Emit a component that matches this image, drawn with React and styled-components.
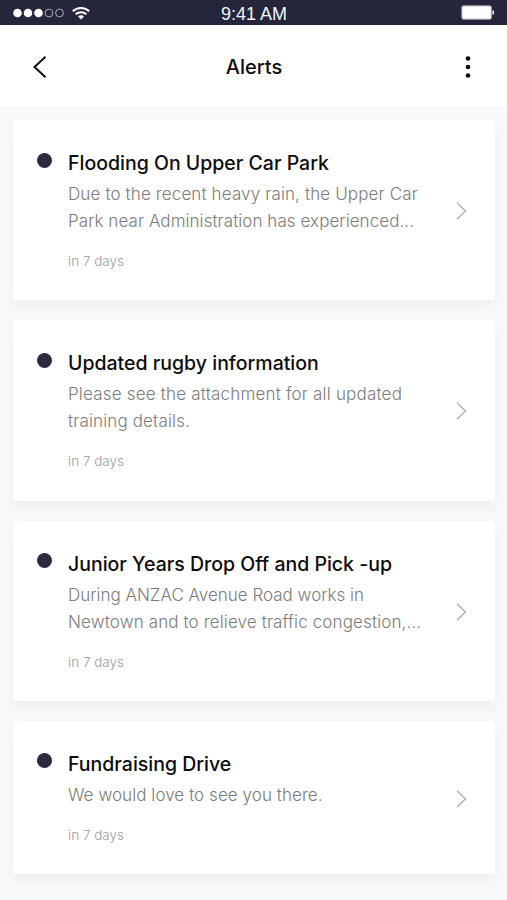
import React from 'react';
import styled, { createGlobalStyle } from 'styled-components';

const GlobalStyle = createGlobalStyle`
  * {
    box-sizing: border-box;
  }

  body {
    margin: 0;
    background: #f8f9fb;
    font-family: 'Inter', 'Liberation Sans', sans-serif;
  }
`;

const Screen = styled.div`
  height: 900px;
  overflow: hidden;
  background: #f8f9fb;
`;

const StatusBar = styled.div`
  display: grid;
  grid-template-columns: 1fr auto 1fr;
  align-items: center;
  height: 25px;
  padding: 0 12px 0 13px;
  background: #25263c;
  color: #f4f4f8;
`;

const Signal = styled.div`
  display: flex;
  align-items: center;
  gap: 7.5px;
`;

const Time = styled.div`
  padding-top: 3px;
  font-family: 'Liberation Sans', sans-serif;
  font-size: 18px;
  line-height: 22px;
`;

const BatterySlot = styled.div`
  display: flex;
  justify-content: flex-end;
`;

const Header = styled.header`
  display: grid;
  grid-template-columns: 1fr auto 1fr;
  align-items: center;
  height: 83px;
  padding: 2px 36px 0 32px;
  background: #fff;
  border-bottom: 1px solid #f1f3f4;
`;

const Heading = styled.h1`
  margin: 0;
  padding-left: 5px;
  font-size: 20px;
  font-weight: 500;
  line-height: 24px;
  color: #0c0c0c;
`;

const IconButton = styled.button`
  display: flex;
  justify-self: ${props => props.$side};
  padding: 0;
  border: none;
  background: transparent;
  cursor: pointer;
`;

const List = styled.main`
  display: flex;
  flex-direction: column;
  gap: 20px;
  padding: 12px 12.5px 0 13px;
`;

const Card = styled.article`
  display: grid;
  grid-template-columns: 15px 1fr 11px;
  column-gap: 16px;
  padding: 29px 28px 28.3px 24px;
  background: #fff;
  border-radius: 3px;
  box-shadow: 0 6px 14px rgba(40, 50, 55, 0.06);
`;

const Dot = styled.span`
  width: 15px;
  height: 15px;
  margin-top: 3.5px;
  border-radius: 50%;
  background: #2b2c40;
`;

const Content = styled.div`
  min-width: 0;
`;

const Title = styled.h2`
  margin: 0 0 3px;
  font-size: 19.5px;
  font-weight: 500;
  line-height: 29px;
  color: #0c0c0c;
`;

const Body = styled.p`
  margin: 0;
  font-size: 17px;
  font-weight: 300;
  line-height: 27px;
  color: #7c7c7c;
`;

const BodyLine = styled.span`
  display: block;
  white-space: nowrap;
  letter-spacing: ${props => props.$tracking}px;
`;

const Age = styled.div`
  margin-top: 16px;
  font-size: 13.5px;
  font-weight: 300;
  line-height: 21px;
  color: #9c9c9c;
`;

const Chevron = styled.svg`
  align-self: center;
  margin-top: 1.4px;
`;

const alerts = [
  {
    title: 'Flooding On Upper Car Park',
    lines: [
      { text: 'Due to the recent heavy rain, the Upper Car', tracking: 0.13 },
      { text: 'Park near Administration has experienced...', tracking: 0.06 },
    ],
  },
  {
    title: 'Updated rugby information',
    lines: [
      { text: 'Please see the attachment for all updated', tracking: 0.19 },
      { text: 'training details.', tracking: 0.14 },
    ],
  },
  {
    title: 'Junior Years Drop Off and Pick -up',
    lines: [
      { text: 'During ANZAC Avenue Road works in', tracking: 0 },
      { text: 'Newtown and to relieve traffic congestion,...', tracking: 0.13 },
    ],
  },
  {
    title: 'Fundraising Drive',
    lines: [{ text: 'We would love to see you there.', tracking: 0.06 }],
  },
];

function SignalDots() {
  return (
    <svg width="51" height="10" viewBox="0 0 51 10">
      {[0, 1, 2, 3, 4].map(i => (
        <circle
          key={i}
          cx={4.5 + i * 10.5}
          cy="5"
          r={i < 3 ? 4.3 : 3.9}
          fill={i < 3 ? '#fff' : 'none'}
          stroke={i < 3 ? 'none' : '#aaaab8'}
        />
      ))}
    </svg>
  );
}

function WifiIcon() {
  return (
    <svg width="18" height="14" viewBox="0 0 18 14" fill="none" stroke="#fff" strokeWidth="2">
      <path d="M0.8 5.2C5.3 0.8 12.7 0.8 17.2 5.2" />
      <path d="M3.7 8.3C6.6 5.4 11.4 5.4 14.3 8.3" />
      <path d="M6 10.5C7.6 8.9 10.4 8.9 12 10.5L9 13.5Z" fill="#fff" stroke="none" />
    </svg>
  );
}

function BatteryIcon() {
  return (
    <svg width="34" height="15" viewBox="0 0 34 15">
      <rect x="0.8" y="0.8" width="29.6" height="13.4" rx="1.5" fill="#fff" stroke="#9a9aaa" />
      <path d="M31.5 5C33.6 5.3 33.6 9.7 31.5 10Z" fill="#fff" />
    </svg>
  );
}

function AlertCard({ title, lines }) {
  return (
    <Card>
      <Dot />
      <Content>
        <Title>{title}</Title>
        <Body>
          {lines.map(line => (
            <BodyLine key={line.text} $tracking={line.tracking}>{line.text}</BodyLine>
          ))}
        </Body>
        <Age>in 7 days</Age>
      </Content>
      <Chevron width="11" height="18" viewBox="0 0 11 18" fill="none" stroke="#b5b5b5" strokeWidth="1.6">
        <path d="M1 0.8L9.4 9L1 17.2" />
      </Chevron>
    </Card>
  );
}

function App() {
  return (
    <>
      <GlobalStyle />
      <Screen>
        <StatusBar>
          <Signal>
            <SignalDots />
            <WifiIcon />
          </Signal>
          <Time>9:41 AM</Time>
          <BatterySlot>
            <BatteryIcon />
          </BatterySlot>
        </StatusBar>

        <Header>
          <IconButton $side="start" aria-label="Back">
            <svg width="15" height="22" viewBox="0 0 15 22" fill="none" stroke="#0c0c0c" strokeWidth="1.9">
              <path d="M13.5 0.7L2.5 11L13.5 21.3" />
            </svg>
          </IconButton>
          <Heading>Alerts</Heading>
          <IconButton $side="end" aria-label="More">
            <svg width="6" height="22" viewBox="0 0 6 22" fill="#0c0c0c">
              <circle cx="3" cy="2.5" r="2.3" />
              <circle cx="3" cy="11" r="2.3" />
              <circle cx="3" cy="19.5" r="2.3" />
            </svg>
          </IconButton>
        </Header>

        <List>
          {alerts.map(alert => (
            <AlertCard key={alert.title} {...alert} />
          ))}
        </List>
      </Screen>
    </>
  );
}

export default App;
